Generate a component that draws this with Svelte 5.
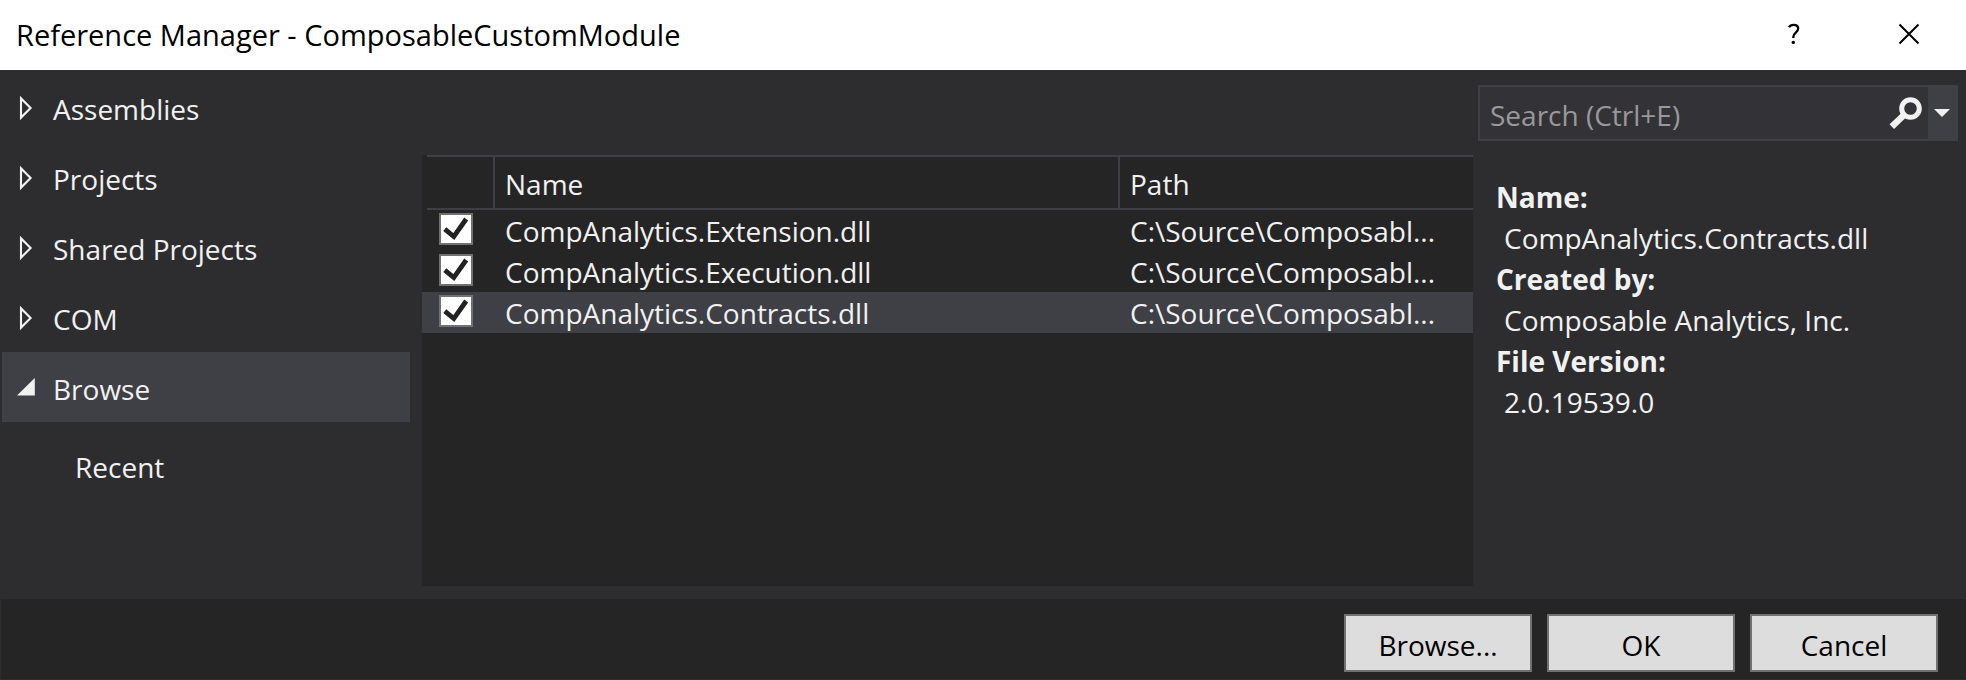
<script>
  const nav = ['Assemblies', 'Projects', 'Shared Projects', 'COM', 'Browse'];
  let active = $state('Browse');

  let files = $state([
    { name: 'CompAnalytics.Extension.dll', path: 'C:\\Source\\Composabl...', checked: true },
    { name: 'CompAnalytics.Execution.dll', path: 'C:\\Source\\Composabl...', checked: true },
    { name: 'CompAnalytics.Contracts.dll', path: 'C:\\Source\\Composabl...', checked: true }
  ]);
  let selected = $state(2);
</script>

<div class="window">
  <header>
    <h1>Reference Manager - ComposableCustomModule</h1>
    <button class="caption" aria-label="Help">
      <svg width="14" height="22" viewBox="0 0 14 22" fill="none">
        <path d="M2 4.2C3 2.4 4.6 1.8 6.6 1.8C9.4 1.8 11.2 3.2 11.2 5.6C11.2 9.6 6.3 9.8 6.3 14V15" stroke="#000" stroke-width="2.3" />
        <circle cx="6.3" cy="19.4" r="1.7" fill="#000" />
      </svg>
    </button>
    <button class="caption" aria-label="Close">
      <svg width="22" height="22" viewBox="0 0 22 22">
        <path d="M1.5 1.5L20.5 20.5M20.5 1.5L1.5 20.5" stroke="#000" stroke-width="2" />
      </svg>
    </button>
  </header>

  <main>
    <nav aria-label="Reference sources">
      {#each nav as item}
        <button class="node" class:active={item === active} onclick={() => (active = item)}>
          <svg class="twisty" width="20" height="26" viewBox="0 0 20 26">
            {#if item === active}
              <path d="M0 20.5L17.8 3V20.5Z" fill="#f1f1f1" />
            {:else}
              <path d="M4 3.4V22.6L13.6 13Z" fill="none" stroke="#f1f1f1" stroke-width="2.1" />
            {/if}
          </svg>
          <span>{item}</span>
        </button>
      {/each}
      <button class="child">Recent</button>
    </nav>

    <section class="list" aria-label="References">
      <table>
        <colgroup>
          <col class="c-gutter" />
          <col class="c-check" />
          <col class="c-name" />
          <col class="c-path" />
        </colgroup>
        <thead>
          <tr>
            <td></td>
            <td class="head"></td>
            <th class="head split" scope="col">Name</th>
            <th class="head split" scope="col">Path</th>
          </tr>
        </thead>
        <tbody>
          {#each files as file, i}
            <tr class:selected={i === selected} onclick={() => (selected = i)}>
              <td></td>
              <td>
                <label class="check">
                  <input type="checkbox" bind:checked={file.checked} aria-label={file.name} />
                  {#if file.checked}
                    <svg width="34" height="32" viewBox="0 0 34 32">
                      <path d="M5.8 16.2L14.8 23.6L27.2 6" fill="none" stroke="#222" stroke-width="4.8" />
                    </svg>
                  {/if}
                </label>
              </td>
              <td class="text">{file.name}</td>
              <td class="text">{file.path}</td>
            </tr>
          {/each}
        </tbody>
      </table>
    </section>

    <aside>
      <div class="search">
        <input type="text" placeholder="Search (Ctrl+E)" aria-label="Search" />
        <button class="find" aria-label="Find">
          <svg width="36" height="36" viewBox="0 0 36 36" fill="none" stroke="#f1f1f1">
            <circle cx="22.5" cy="12.5" r="8.8" stroke-width="5" />
            <path d="M16.5 18.5L3.8 30.7" stroke-width="6.5" />
          </svg>
        </button>
        <button class="drop" aria-label="Search options">
          <svg width="16" height="8" viewBox="0 0 16 8"><path d="M0 0H16L8 8Z" fill="#f1f1f1" /></svg>
        </button>
      </div>
      <dl>
        <dt>Name:</dt>
        <dd>CompAnalytics.Contracts.dll</dd>
        <dt>Created by:</dt>
        <dd>Composable Analytics, Inc.</dd>
        <dt>File Version:</dt>
        <dd>2.0.19539.0</dd>
      </dl>
    </aside>
  </main>

  <footer>
    <button>Browse...</button>
    <button>OK</button>
    <button>Cancel</button>
  </footer>
</div>

<style>
  :global(body) {
    margin: 0;
    background: #2d2d30;
  }

  .window {
    display: flex;
    flex-direction: column;
    min-height: 100vh;
    color: #f1f1f1;
    font: 28px/40px 'Open Sans', 'Noto Sans', sans-serif;
  }

  .window * {
    box-sizing: border-box;
  }

  button,
  input {
    margin: 0;
    padding: 0;
    border: 0;
    border-radius: 0;
    background: none;
    color: inherit;
    font: inherit;
  }

  svg {
    display: block;
    flex: none;
  }

  header {
    display: flex;
    align-items: stretch;
    height: 70px;
    background: #fff;
    color: #000;
  }

  h1 {
    flex: 1;
    margin: 0;
    padding: 15px 16px;
    font: inherit;
    font-size: 29px;
    white-space: nowrap;
  }

  .caption {
    display: flex;
    justify-content: center;
    width: 115px;
    padding-top: 23px;
  }

  main {
    flex: 1;
    display: flex;
  }

  nav {
    display: flex;
    flex-direction: column;
    width: 410px;
    padding: 2px 0 0 2px;
  }

  .node {
    display: flex;
    align-items: center;
    gap: 16px;
    height: 70px;
    padding: 4px 15px 0;
    text-align: left;
  }

  .twisty {
    margin-bottom: 2px;
  }

  .active {
    background: #3f3f46;
  }

  .child {
    height: 70px;
    margin-top: 8px;
    padding: 4px 73px 0;
    text-align: left;
  }

  .list {
    flex: 1;
    min-width: 0;
    margin: 85px 0 13px 12px;
    background: #252526;
  }

  table {
    width: 100%;
    table-layout: fixed;
    border-collapse: separate;
    border-spacing: 0;
  }

  td,
  th {
    padding: 0;
    font-weight: 400;
    text-align: left;
    vertical-align: top;
  }

  .c-gutter {
    width: 5px;
  }

  .c-check {
    width: 66px;
  }

  .c-path {
    width: 355px;
  }

  .head {
    height: 55px;
    padding-top: 7px;
    border: solid #3f3f46;
    border-width: 2px 0;
  }

  .split {
    padding-left: 10px;
    border-left-width: 2px;
  }

  tbody tr {
    height: 41px;
  }

  .selected {
    background: #3f3f46;
  }

  .text {
    padding-left: 12px;
    overflow: hidden;
    line-height: 41px;
    text-overflow: ellipsis;
    vertical-align: bottom;
    white-space: nowrap;
  }

  tbody .text {
    height: 41px;
    line-height: 39px;
    padding-top: 2px;
  }

  .check {
    display: grid;
    width: 34px;
    margin: 3px 0 0 12px;
  }

  .check input,
  .check svg {
    grid-area: 1 / 1;
  }

  .check input {
    appearance: none;
    width: 34px;
    height: 32px;
    border: 2px solid #717171;
    background: #fff;
  }

  .check svg {
    pointer-events: none;
  }

  aside {
    width: 493px;
    padding: 15px 8px 0 5px;
  }

  .search {
    display: flex;
    height: 56px;
    border: 2px solid #3f3f46;
    background: #333337;
  }

  .search input {
    flex: 1;
    min-width: 0;
    padding: 4px 0 0 10px;
    outline: none;
  }

  .search input::placeholder {
    color: #999;
    opacity: 1;
  }

  .find {
    display: flex;
    align-items: center;
    justify-content: center;
    width: 44px;
    padding-top: 2px;
  }

  .drop {
    display: flex;
    align-items: center;
    justify-content: center;
    width: 28px;
    background: #3f3f46;
  }

  dl {
    margin: 36px 0 0;
    padding-left: 18px;
    line-height: 41px;
  }

  dt {
    font-weight: 700;
  }

  dd {
    margin: 0 0 0 8px;
  }

  footer {
    display: flex;
    justify-content: flex-end;
    gap: 15px;
    margin: 0 0 1px 1px;
    padding: 15px 28px 7px;
    background: #252526;
  }

  footer button {
    width: 188px;
    height: 58px;
    padding-top: 4px;
    border: 2px solid #717171;
    background: #ddd;
    color: #000;
  }
</style>
